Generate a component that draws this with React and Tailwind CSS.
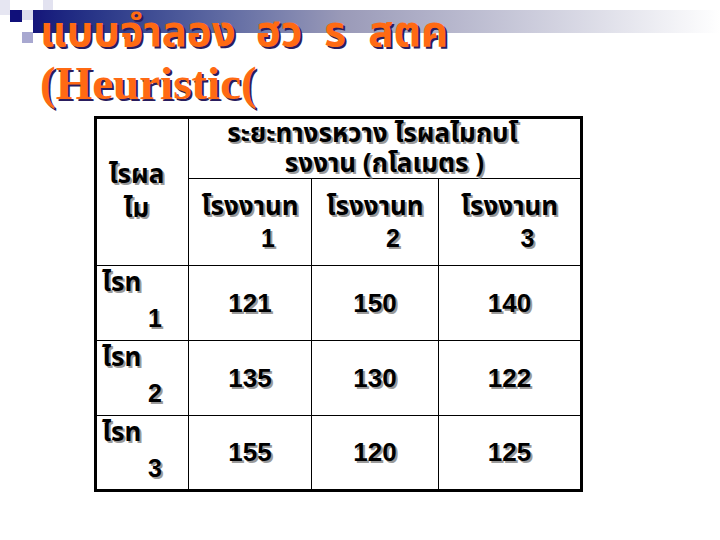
import React from 'react';

const thai = "font-['Tahoma','Noto_Sans_Thai','Loma','Garuda','DejaVu_Sans',sans-serif]";
const arial = "font-['Liberation_Sans',Arial,sans-serif]";
const shadow = '[text-shadow:2px_2px_0_#9a9a9a]';

function Squares() {
  return (
    <svg width="56" height="44" viewBox="0 0 56 44" className="shrink-0">
      <rect x="0" y="0" width="10" height="15" fill="#e6e6f2" />
      <rect x="10" y="10" width="12" height="12" fill="#10107a" />
      <rect x="22" y="10" width="11" height="10" fill="#dcdcee" />
      <rect x="33" y="20" width="10" height="12" fill="#d4d4ea" />
      <rect x="22" y="32" width="11" height="11" fill="#a8a8d0" />
      <rect x="43" y="0" width="10" height="10" fill="#e2e2f0" />
    </svg>
  );
}

const rows = [
  { n: '1', v: ['121', '150', '140'] },
  { n: '2', v: ['135', '130', '122'] },
  { n: '3', v: ['155', '120', '125'] },
];

export default function App() {
  return (
    <div className="w-[720px] h-[540px] bg-white overflow-hidden">
      {/* decorative banner */}
      <div className="flex items-start h-[44px]">
        <Squares />
        <div className="flex-1 mt-[10px] h-[23px] -ml-[23px] bg-linear-to-r from-[#15157a] via-[#9a9ab8] via-45% to-white" />
      </div>

      {/* title */}
      <div className="-mt-[34px] pl-[40px] text-[#ff6a13] font-bold [text-shadow:2px_2px_0_#2a1d5e]">
        <div className={`${thai} text-[42px] leading-[46px] flex`}>
          <span>แบบจำลอง</span>
          <span className="ml-[20px]">ฮว</span>
          <span className="ml-[22px]">ร</span>
          <span className="ml-[22px]">สตค</span>
        </div>
        <div className="font-['Liberation_Serif','Times_New_Roman',serif] text-[47px] leading-[54px]">(Heuristic(</div>
      </div>

      {/* table */}
      <table className="mt-[6px] ml-[94px] border-collapse border-[3px] border-black table-fixed text-black font-bold">
        <tbody>
          <tr className="h-[61px]">
            <td rowSpan={2} className={`w-[93px] border border-black align-middle text-center pr-[12px] ${thai} text-[26px] leading-[34px] ${shadow}`}>
              <div>ไรผล</div>
              <div>ไม</div>
            </td>
            <td colSpan={3} className={`border border-black text-center ${thai} text-[26px] leading-[28px] ${shadow}`}>
              <div className="pr-[24px]">ระยะทางรหวาง ไรผลไมกบโ</div>
              <div className="pt-[2px]">รงงาน (กโลเมตร )</div>
            </td>
          </tr>
          <tr className="h-[87px]">
            {[['1', 'w-[123px]'], ['2', 'w-[127px]'], ['3', 'w-[143px]']].map(([n, w]) => (
              <td key={n} className={`${w} border border-black text-center align-middle ${shadow}`}>
                <div className={`${thai} text-[26px] leading-[32px]`}>โรงงานท</div>
                <div className={`${arial} text-[25px] leading-[30px] pl-[36px]`}>{n}</div>
              </td>
            ))}
          </tr>
          {rows.map((r) => (
            <tr key={r.n} className="h-[75px]">
              <td className={`border border-black align-top pl-[5px] pt-[2px] ${shadow}`}>
                <div className={`${thai} text-[26px] leading-[30px]`}>ไรท</div>
                <div className={`${arial} text-[25px] leading-[28px] pl-[46px] pt-[6px]`}>{r.n}</div>
              </td>
              {r.v.map((v, i) => (
                <td key={i} className={`border border-black text-center align-middle ${arial} text-[26px] ${shadow}`}>{v}</td>
              ))}
            </tr>
          ))}
        </tbody>
      </table>
    </div>
  );
}
